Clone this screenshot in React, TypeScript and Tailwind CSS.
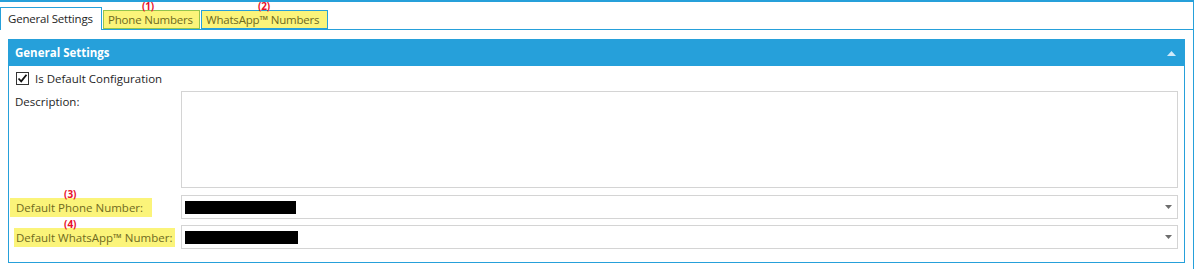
import React from 'react';

const BLUE = 'border-[#26a0da]';

function Note({ n, className }: { n: number; className: string }) {
  return (
    <span
      className={`absolute text-[10px] font-bold leading-none text-[#e8102a] ${className}`}
    >
      ({n})
    </span>
  );
}

function Select({ barWidth }: { barWidth: string }) {
  return (
    <div className="flex h-[24px] flex-1 items-center border border-[#d4d4d4] bg-white pl-[3px] pr-[4px]">
      <div className={`h-[13px] bg-black ${barWidth}`} />
      <div className="flex-1" />
      <svg width="7" height="4" viewBox="0 0 7 4" className="mr-[1px]">
        <path d="M0 0h7L3.5 4z" fill="#6d6d6d" />
      </svg>
    </div>
  );
}

export default function App() {
  return (
    <div
      className="h-[269px] w-[1194px] border-t-2 border-r border-[#26a0da] bg-white text-[12px] text-[#1e1e1e]"
      style={{ fontFamily: '"Open Sans", "Noto Sans", sans-serif' }}
    >
      {/* Tab strip */}
      <div className={`relative flex h-[28px] items-end border-b ${BLUE}`}>
        <div className={`-mb-px flex h-[23px] w-[102px] items-center border border-b-0 ${BLUE} bg-white pl-[7px] text-[11.5px] tracking-[-0.2px]`}>
          General Settings
        </div>
        <div className="relative ml-[1px] flex h-[19px] w-[97px] items-center border border-[#94c44e] bg-[#fbf47a] pl-[4px] text-[11.5px] tracking-[-0.2px] text-[#6f6a1e]">
          Phone Numbers
          <Note n={1} className="left-[38px] top-[-10px]" />
        </div>
        <div className={`relative ml-[1px] flex h-[19px] w-[127px] items-center border ${BLUE} bg-[#fbf47a] pl-[4px] text-[11.5px] tracking-[-0.2px] text-[#6f6a1e]`}>
          WhatsApp™ Numbers
          <Note n={2} className="left-[56px] top-[-10px]" />
        </div>
      </div>

      {/* Panel */}
      <div className={`ml-[8px] mt-[9px] w-[1177px] border ${BLUE}`}>
        <div className="flex h-[26px] items-center justify-between bg-[#26a0da] pl-[6px] pr-[8px] font-bold text-white">
          <span className="text-[11.5px]">General Settings</span>
          <svg width="9" height="5" viewBox="0 0 9 5">
            <path d="M4.5 0L9 5H0z" fill="#cfeafa" />
          </svg>
        </div>

        <div className="flex flex-col pb-[13px] pl-[6px] pr-[6px]">
          {/* Checkbox */}
          <div className="mt-[4px] flex items-center pl-[1px]">
            <div className="flex h-[13px] w-[13px] items-center justify-center border border-[#333] bg-white">
              <svg width="11" height="11" viewBox="0 0 11 11">
                <path d="M1.5 5.5l2.7 2.8L9.5 1.8" fill="none" stroke="#111" strokeWidth="1.8" />
              </svg>
            </div>
            <span className="ml-[6px] text-[11.5px]">Is Default Configuration</span>
          </div>

          {/* Description */}
          <div className="mt-[4px] flex">
            <div className="w-[166px] pt-[2px] text-[11.5px]">Description:</div>
            <div className="h-[97px] flex-1 border border-[#d4d4d4] bg-white" />
          </div>

          {/* Default phone */}
          <div className="mt-[7px] flex items-center">
            <div className="relative w-[166px]">
              <span className="ml-[-5px] inline-block bg-[#fbf47a] pl-[6px] pr-[9px] py-[1px] text-[11.5px] text-[#6f6a1e]">
                Default Phone Number:
              </span>
              <Note n={3} className="left-[49px] top-[-9px]" />
            </div>
            <Select barWidth="w-[111px]" />
          </div>

          {/* Default WhatsApp */}
          <div className="mt-[6px] flex items-center">
            <div className="relative w-[166px]">
              <span className="ml-[-1px] inline-block bg-[#fbf47a] pl-[2px] pr-[3px] py-[1px] text-[11.5px] text-[#6f6a1e]">
                Default WhatsApp™ Number:
              </span>
              <Note n={4} className="left-[49px] top-[-9px]" />
            </div>
            <Select barWidth="w-[113px]" />
          </div>
        </div>
      </div>
    </div>
  );
}
